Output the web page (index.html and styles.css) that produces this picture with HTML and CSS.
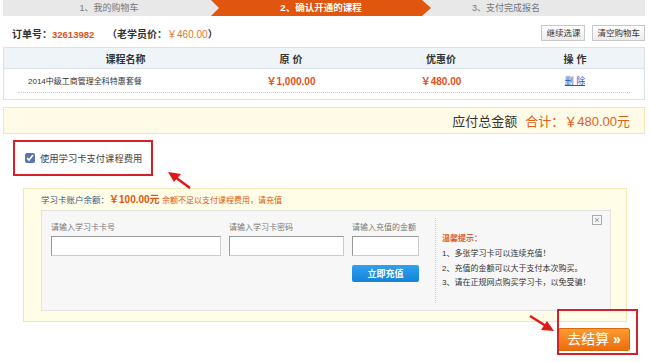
FILE: index.html
```html
<!DOCTYPE html>
<html lang="zh-CN">
<head>
    <meta charset="UTF-8">
    <title>确认开通的课程</title>
    <link rel="stylesheet" href="styles.css">
</head>
<body>
<div class="page">

    <!-- Steps -->
    <div class="steps">
        <div class="step step-first">1、我的购物车</div>
        <div class="step step-active">2、确认开通的课程</div>
        <div class="step step-last">3、支付完成报名</div>
    </div>

    <!-- Order line -->
    <div class="order-row">
        <div class="order-info">
            订单号：<span class="order-no">32613982</span>
            <span class="old-price">（老学员价：<span class="old-amount">￥460.00</span>）</span>
        </div>
        <div class="order-actions">
            <button class="btn-small">继续选课</button>
            <button class="btn-small">清空购物车</button>
        </div>
    </div>

    <!-- Course table -->
    <div class="course-table">
        <div class="tr th">
            <div class="td">课程名称</div>
            <div class="td">原 价</div>
            <div class="td">优惠价</div>
            <div class="td">操 作</div>
            <div class="td"></div>
        </div>
        <div class="tr body-row">
            <div class="td name">2014中级工商管理全科特惠套餐</div>
            <div class="td price">￥1,000.00</div>
            <div class="td price">￥480.00</div>
            <div class="td"><a href="#" class="del">删 除</a></div>
            <div class="td"></div>
        </div>
    </div>

    <!-- Total -->
    <div class="total-bar">
        <span class="total-label">应付总金额</span>
        <span class="total-sum">合计：￥480.00元</span>
    </div>

    <!-- Use card -->
    <label class="use-card">
        <input type="checkbox" checked>
        <span>使用学习卡支付课程费用</span>
    </label>

    <!-- Card panel -->
    <div class="card-panel">
        <div class="card-title">
            学习卡账户余额：<span class="balance">￥100.00元</span>
            <span class="balance-tip">余额不足以支付课程费用，请充值</span>
        </div>
        <div class="card-box">
            <div class="card-form">
                <div class="field field-no">
                    <div class="field-label">请输入学习卡卡号</div>
                    <input type="text" class="field-input">
                </div>
                <div class="field field-pwd">
                    <div class="field-label">请输入学习卡密码</div>
                    <input type="text" class="field-input">
                </div>
                <div class="field field-amt">
                    <div class="field-label">请输入充值的金额</div>
                    <input type="text" class="field-input">
                    <button class="btn-recharge">立即充值</button>
                </div>
            </div>
            <div class="card-tips">
                <div class="tips-title">温馨提示：</div>
                <div class="tips-line">1、多张学习卡可以连续充值！</div>
                <div class="tips-line">2、充值的金额可以大于支付本次购买。</div>
                <div class="tips-line">3、请在正规网点购买学习卡，以免受骗！</div>
                <span class="close-x">×</span>
            </div>
        </div>
    </div>

    <!-- Checkout -->
    <div class="checkout-row">
        <button class="btn-checkout">去结算 <span class="chev">»</span></button>
    </div>

    <!-- Annotations -->
    <svg class="marks" width="650" height="362" viewBox="0 0 650 362">
        <rect x="558" y="310" width="79" height="44" fill="none" stroke="#d42028" stroke-width="2"/>
        <line x1="190" y1="188" x2="175" y2="177" stroke="#e01818" stroke-width="2.5"/>
        <polygon points="168,172 181,174 174,182" fill="#e01818"/>
        <line x1="530" y1="316" x2="546" y2="326" stroke="#e01818" stroke-width="2.5"/>
        <polygon points="554,331 541,330 547,321" fill="#e01818"/>
    </svg>
</div>
</body>
</html>
```

FILE: styles.css
```css
/* General */
body {
    margin: 0;
    background: #fff;
    color: #333;
    font-family: "Liberation Sans", "Noto Sans CJK SC", sans-serif;
    font-size: 9px;
}

.page {
    position: relative;
    width: 642px;
    height: 362px;
    margin-left: 3px;
}

/* Steps */
.steps {
    display: flex;
    height: 16px;
    background: #e8e8e8;
    line-height: 16px;
}

.step {
    text-align: center;
    color: #777;
    font-size: 9px;
}

.step-first {
    width: 212px;
}

.step-active {
    width: 220px;
    margin-left: -4px;
    background: #e0560f;
    color: #fff;
    font-weight: bold;
    font-size: 9.5px;
    clip-path: polygon(0 0, calc(100% - 9px) 0, 100% 50%, calc(100% - 9px) 100%, 0 100%, 8px 50%);
}

.step-last {
    flex: 1;
    padding-right: 64px;
}

/* Order row */
.order-row {
    display: flex;
    justify-content: space-between;
    align-items: center;
    padding: 9px 0 0 9px;
    height: 16px;
}

.order-info {
    font-size: 10px;
    font-weight: bold;
    color: #333;
}

.order-no {
    color: #d8561c;
    font-size: 9.5px;
}

.old-price {
    margin-left: 10px;
}

.old-amount {
    color: #e0742e;
    font-weight: normal;
}

.order-actions {
    display: flex;
    gap: 7px;
}

.btn-small {
    height: 16px;
    padding: 0 4px;
    border: 1px solid #c8c8c8;
    background: linear-gradient(#fff, #ececec);
    font-family: inherit;
    font-size: 8.5px;
    color: #333;
    line-height: 14px;
}

/* Course table */
.course-table {
    margin-top: 6px;
    border: 1px solid #dbe3ea;
    padding-bottom: 6px;
}

.tr {
    display: grid;
    grid-template-columns: 243px 88px 212px 56px 1fr;
    align-items: center;
}

.th {
    height: 20px;
    background: #eef4f8;
    border-bottom: 1px solid #dbe3ea;
    font-weight: bold;
    font-size: 10px;
    color: #333;
}

.td {
    text-align: center;
}

.body-row {
    height: 23px;
    margin: 0 14px;
    grid-template-columns: 229px 88px 212px 56px 1fr;
    border-bottom: 1px dotted #ccc;
}

.body-row .name {
    text-align: left;
    padding-left: 10px;
    font-size: 8px;
}

.price {
    color: #e2501a;
    font-weight: bold;
    font-size: 10px;
}

.del {
    color: #2a5ab0;
    font-size: 9px;
}

/* Total */
.total-bar {
    margin-top: 7px;
    height: 25px;
    display: flex;
    justify-content: flex-end;
    align-items: center;
    gap: 8px;
    padding-right: 14px;
    background: #fffbe6;
    border: 1px solid #f5e5b5;
    font-size: 13px;
}

.total-label {
    color: #333;
}

.total-sum {
    color: #e2601a;
}

/* Use card */
.use-card {
    display: flex;
    align-items: center;
    gap: 3px;
    width: 126px;
    height: 32px;
    margin: 6px 0 0 10px;
    padding-left: 10px;
    border: 2px solid #d42028;
    font-size: 9.3px;
    color: #444;
}

.use-card input {
    width: 10px;
    height: 10px;
    margin: 0 2px 0 0;
    accent-color: #5a74b0;
}

/* Card panel */
.card-panel {
    width: 570px;
    margin: 12px 0 0 20px;
    padding: 2px 15px 10px 17px;
    background: #fffde6;
    border: 1px solid #f3e6b8;
}

.card-title {
    height: 19px;
    line-height: 17px;
    color: #3a5a8a;
    font-size: 8.5px;
}

.balance {
    color: #e0560f;
    font-weight: bold;
    font-size: 10px;
}

.balance-tip {
    color: #e0560f;
    font-size: 8px;
}

.card-box {
    display: flex;
    height: 99px;
    background: #f7f7f7;
    border: 1px solid #e2e2e2;
}

.card-form {
    display: flex;
    gap: 8px;
    padding: 10px 0 0 9px;
    width: 369px;
}

.field {
    display: flex;
    flex-direction: column;
}

.field-no {
    width: 170px;
}

.field-pwd {
    width: 115px;
}

.field-amt {
    width: 67px;
}

.field-label {
    height: 15px;
    color: #777;
    font-size: 8px;
    white-space: nowrap;
}

.field-input {
    box-sizing: border-box;
    height: 20px;
    width: 100%;
    margin: 0;
    border: 1px solid #aaa;
    border-color: #999 #ccc #ccc #999;
    background: #fff;
}

.btn-recharge {
    margin-top: 9px;
    height: 17px;
    padding: 0;
    border: none;
    border-radius: 2px;
    background: linear-gradient(#30a0f0, #1583d8);
    color: #fff;
    font-family: inherit;
    font-size: 9px;
    font-weight: bold;
}

.card-tips {
    position: relative;
    flex: 1;
    margin: 7px 0 7px 15px;
    padding: 14px 0 0 6px;
    border-left: 1px dotted #ccc;
    font-size: 8px;
    color: #333;
}

.tips-title {
    color: #e0602a;
    font-weight: bold;
    margin-bottom: 1px;
    line-height: 14px;
}

.tips-line {
    line-height: 14.5px;
    white-space: nowrap;
}

.close-x {
    position: absolute;
    top: -3px;
    right: 8px;
    width: 8px;
    height: 8px;
    border: 1px solid #aaa;
    color: #888;
    font-size: 9px;
    line-height: 8px;
    text-align: center;
}

/* Checkout */
.checkout-row {
    display: flex;
    justify-content: flex-end;
    padding-right: 15px;
    margin-top: 6px;
}

.btn-checkout {
    width: 72px;
    height: 23px;
    padding: 0;
    border: 1px solid #d86a0a;
    border-radius: 2px;
    background: linear-gradient(#fb9a30, #ec6d0c);
    color: #fff;
    font-family: inherit;
    font-size: 14px;
    line-height: 21px;
}

.chev {
    font-weight: bold;
    font-size: 14px;
}

/* Annotations overlay */
.marks {
    position: absolute;
    left: -3px;
    top: 0;
    pointer-events: none;
}
```
